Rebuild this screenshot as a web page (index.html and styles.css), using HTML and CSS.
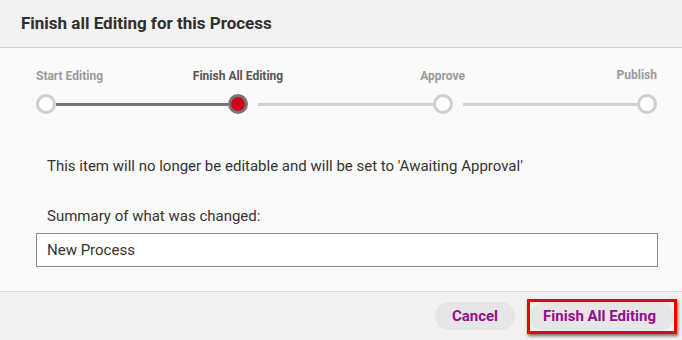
FILE: index.html
```html
<!DOCTYPE html>
<html lang="en">
<head>
<meta charset="utf-8">
<title>Finish all Editing for this Process</title>
<link rel="stylesheet" href="styles.css">
</head>
<body>
<div class="dialog">
  <header class="head">
    <h1 class="title">Finish all Editing for this Process</h1>
  </header>
  <main class="content">
    <div class="stepper">
      <div class="label-cell first"><span class="step-label">Start Editing</span></div>
      <div class="spacer"></div>
      <div class="label-cell"><span class="step-label current">Finish All Editing</span></div>
      <div class="spacer"></div>
      <div class="label-cell"><span class="step-label">Approve</span></div>
      <div class="spacer"></div>
      <div class="label-cell last"><span class="step-label raised">Publish</span></div>

      <div class="dot"></div>
      <div class="line done"></div>
      <div class="dot active"></div>
      <div class="line gap"></div>
      <div class="dot"></div>
      <div class="line gap"></div>
      <div class="dot"></div>
    </div>
    <p class="msg">This item will no longer be editable and will be set to 'Awaiting Approval'</p>
    <label class="field-label" for="summary">Summary of what was changed:</label>
    <input class="field" id="summary" type="text" value="New Process">
  </main>
  <footer class="foot">
    <button class="btn" type="button">Cancel</button>
    <div class="highlight">
      <button class="btn primary" type="button">Finish All Editing</button>
    </div>
  </footer>
</div>
</body>
</html>
```
FILE: styles.css
```css
* { box-sizing: border-box; }
html, body { margin: 0; padding: 0; }
body {
  width: 682px;
  height: 340px;
  overflow: hidden;
  background: #fafafa;
  font-family: Roboto, "Liberation Sans", Arial, sans-serif;
  color: #333;
}
.dialog {
  display: flex;
  flex-direction: column;
  height: 340px;
}
.head {
  height: 48px;
  background: #f2f2f2;
  border-bottom: 1px solid #d6d6d6;
  display: flex;
  align-items: center;
  padding: 0 0 2px 21px;
}
.title {
  margin: 0;
  font-size: 17px;
  font-weight: 700;
  color: #2f2f2f;
}
.content {
  flex: 1;
  background: #fafafa;
  padding: 20px 24px 0 36px;
  display: flex;
  flex-direction: column;
}
.stepper {
  display: grid;
  grid-template-columns: 20px 172px 20px 1fr 20px 1fr 20px;
  grid-template-rows: 16px 20px;
  row-gap: 10px;
  width: 621px;
}
.label-cell {
  display: flex;
  justify-content: center;
  align-items: center;
}
.label-cell.first { justify-content: flex-start; }
.label-cell.last { justify-content: flex-end; }
.step-label {
  white-space: nowrap;
  font-size: 12px;
  font-weight: 700;
  color: #9a9a9a;
  line-height: 16px;
}
.step-label.current { color: #555; }
.step-label.raised { margin-bottom: 3px; }
.dot {
  width: 20px;
  height: 20px;
  border-radius: 50%;
  border: 3px solid #cfcfcf;
  background: #fff;
}
.dot.active {
  border-color: #777;
  background: #d0021b;
}
.line {
  align-self: center;
  height: 3px;
  background: #d2d2d2;
}
.line.done { background: #777; }
.line.gap { margin-left: 10px; }
.msg {
  margin: 42px 0 0 11px;
  font-size: 15px;
  line-height: 20px;
}
.field-label {
  margin: 30px 0 0 11px;
  font-size: 15px;
  line-height: 20px;
}
.field {
  margin-top: 7px;
  width: 622px;
  height: 34px;
  border: 1px solid #8a8a8a;
  border-radius: 0;
  background: #fff;
  padding: 0 10px;
  font-family: inherit;
  font-size: 15px;
  color: #333;
  outline: none;
}
.foot {
  height: 49px;
  background: #f1f1f1;
  border-top: 1px solid #dcdcdc;
  display: flex;
  justify-content: flex-end;
  align-items: center;
  gap: 12px;
  padding: 0 5px 0 0;
}
.btn {
  height: 28px;
  border: 0;
  border-radius: 14px;
  background: #e6e6e6;
  padding: 0 17px;
  font-family: inherit;
  font-size: 15px;
  font-weight: 700;
  color: #9a0a8d;
  cursor: pointer;
}
.highlight {
  display: flex;
  border: 3px solid #ee0000;
  box-shadow: 1px 2px 3px rgba(0, 0, 0, 0.55);
}
.btn.primary {
  height: 29px;
  padding: 0 18px 0 13px;
}
```
